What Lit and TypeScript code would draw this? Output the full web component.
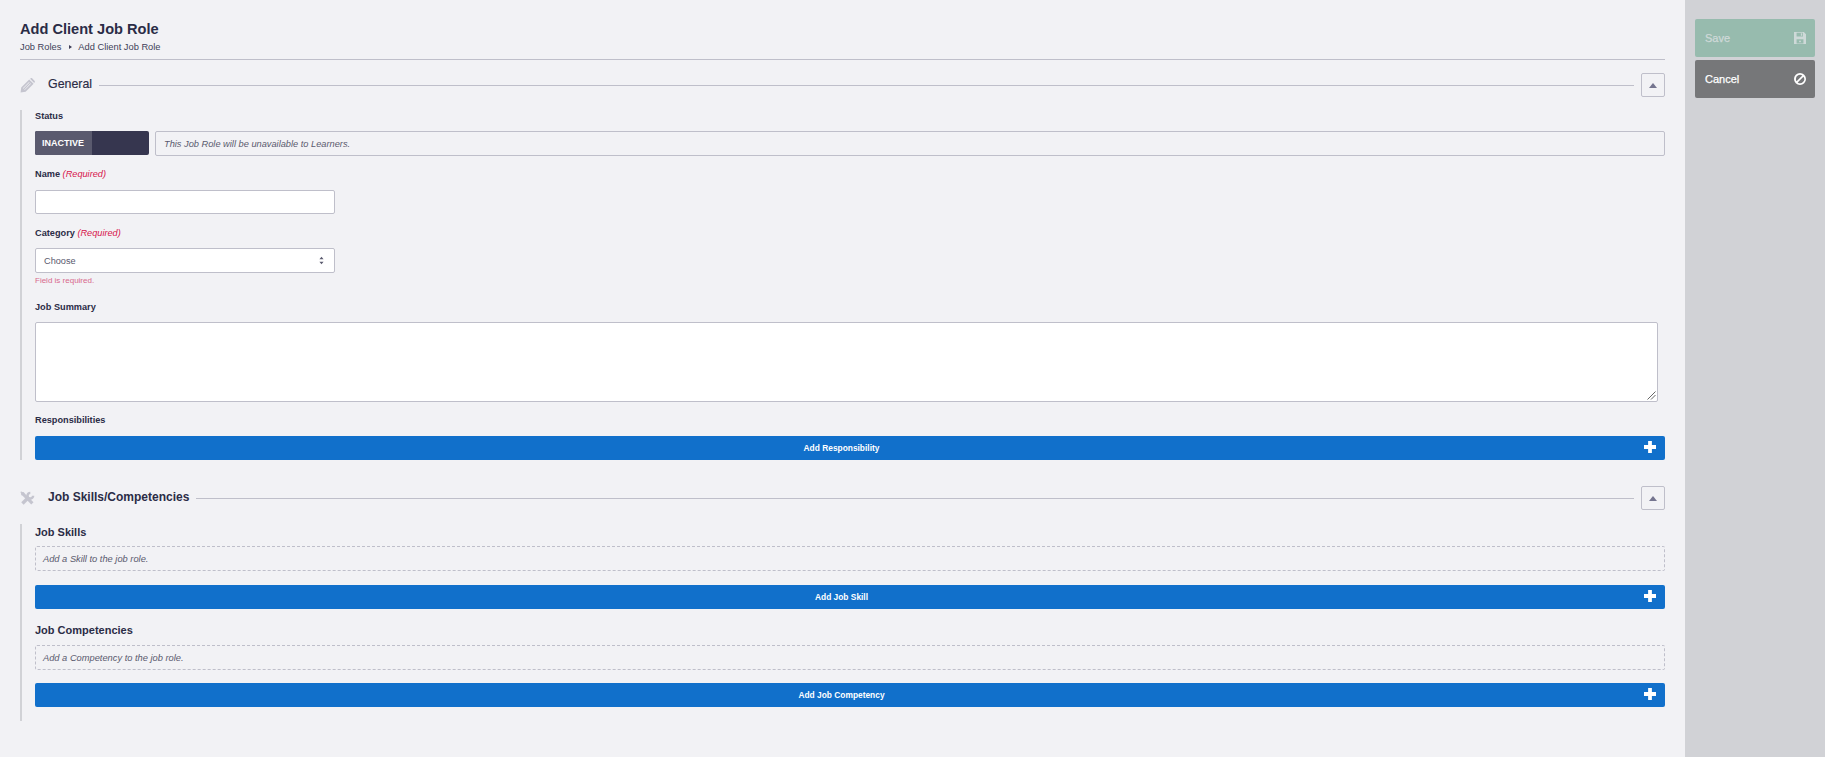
import { LitElement, html, css, svg } from "lit";
import { customElement } from "lit/decorators.js";

const pencil = svg`<path fill-rule="evenodd" d="M.6 15.400 1.300 10 9.800 1.500 14.500 6.200 6 14.700zM3 10.900 9.700 4.200 10.200 4.700 3.500 11.400zM5 12.900 11.700 6.200 11.200 5.700 4.500 12.400zM10.700 .9 11.600.3c.4-.3.9-.3 1.300 0l2.800 2.800c.3.4.3.9 0 1.300l-.6.9z"/>`;
const tools = svg`
  <path d="M2.600 2.600 13.200 13.200" stroke-width="3.300" fill="none"/>
  <path d="M1 1 4.500 2.200 2.200 4.500z" stroke-width="1"/>
  <path d="M2.600 13.400 9.300 6.700" stroke-width="3.600" fill="none"/>
  <path d="M11 2A3 3 0 1 0 14 5" stroke-width="2.600" fill="none"/>`;
const save = svg`<path fill-rule="evenodd" d="M1 1h11.500L15 3.500V15H1zM4 1.800v4.400h7.500V1.800zM4 9.500v5h8v-5zM9 2.600h1.600v2.800H9z"/><circle cx="8" cy="12" r="1.100"/>`;
const ban = svg`<path fill-rule="evenodd" d="M8 1a7 7 0 1 0 0 14A7 7 0 0 0 8 1zM3.200 8a4.800 4.800 0 0 1 7.500-4L4 10.700A4.800 4.800 0 0 1 3.200 8zM5.300 12l6.700-6.700A4.800 4.800 0 0 1 5.300 12z"/>`;
const plus = svg`<path d="M5.800 1h4.400v4.800H15v4.400h-4.800V15H5.800v-4.800H1V5.800h4.800z"/>`;

@customElement("app-root")
export class AppRoot extends LitElement {
  static styles = css`
    :host {
      display: flex;
      width: 1825px;
      height: 757px;
      overflow: hidden;
      background: #f2f2f5;
      color: #2b2c46;
      font-family: "Liberation Sans", Arial, sans-serif;
    }
    * { box-sizing: border-box; }
    .main { width: 1685px; padding: 20px 20px 0; }
    .side {
      width: 140px;
      background: #d1d2d6;
      padding: 19px 10px;
      display: flex;
      flex-direction: column;
      gap: 3px;
    }
    .act {
      height: 38px;
      border-radius: 2px;
      color: #fff;
      font-size: 11px;
      font-weight: 400;
      -webkit-text-stroke: 0.25px currentColor;
      display: flex;
      align-items: center;
      justify-content: space-between;
      padding: 0 9px 0 10px;
    }
    .act svg { width: 12px; height: 12px; fill: currentColor; margin-top: -1px; }
    .save { background: #97bbae; color: #ced9d8; }
    .cancel { background: #767779; }
    h1 { margin: 0; font-size: 14.6px; line-height: 18px; font-weight: 700; }
    .crumbs {
      display: flex;
      align-items: center;
      font-size: 9.3px;
      line-height: 12px;
      margin-top: 3px;
      color: #3e3f58;
    }
    .crumbs i {
      width: 0; height: 0;
      margin: 0 6px 0 8px;
      border-left: 3px solid #3e3f58;
      border-top: 2.500px solid transparent;
      border-bottom: 2.500px solid transparent;
    }
    .head-rule { height: 1px; background: #bfbfca; margin-top: 6px; }
    .sec-head { display: flex; align-items: center; height: 24px; margin-top: 13px; }
    .sec-head.second { margin-top: 26px; }
    .sec-icon { width: 15px; height: 15px; fill: #c5c5cf; stroke: #c5c5cf; stroke-width: 0; flex: none; margin-right: 13px; }
    .sec-head h2 {
      margin: 0 0 2px;
      font-size: 12.4px;
      font-weight: 400;
      -webkit-text-stroke: 0.15px currentColor;
      line-height: 16px;
      white-space: nowrap;
    }
    .sec-head.second h2 { font-size: 12px; font-weight: 700; -webkit-text-stroke: 0; }
    .rule { flex: 1; height: 1px; background: #bfbfca; margin: 0 7px 0 7px; }
    .toggle {
      width: 24px; height: 24px;
      border: 1px solid #bfbfca;
      border-radius: 2px;
      display: flex;
      align-items: center;
      justify-content: center;
    }
    .toggle i {
      width: 0; height: 0;
      border-left: 4.500px solid transparent;
      border-right: 4.500px solid transparent;
      border-bottom: 5px solid #75758f;
    }
    .body {
      border-left: 2px solid #d1d2d6;
      margin-top: 13px;
      padding-left: 13px;
    }
    .second + .body { margin-top: 14px; }
    label {
      display: block;
      font-size: 9.2px;
      font-weight: 700;
      line-height: 12px;
    }
    label em { color: #d7144b; font-weight: 400; font-size: 9.2px; }
    .status-row { display: flex; gap: 6px; margin-top: 9px; }
    .switch { width: 114px; height: 24px; background: #36364f; border-radius: 2px; overflow: hidden; flex: none; }
    .switch span {
      display: flex;
      align-items: center;
      width: 57px;
      height: 24px;
      padding-left: 7px;
      background: #5a5a6e;
      color: #fff;
      font-size: 9px;
      font-weight: 700;
    }
    .note {
      flex: 1;
      height: 25px;
      border: 1px solid #bfbfca;
      border-radius: 2px;
      display: flex;
      align-items: center;
      padding-left: 8px;
      font-size: 9.25px;
      font-style: italic;
      color: #5a5a6e;
    }
    .field {
      width: 300px;
      background: #fff;
      border: 1px solid #bfbfca;
      border-radius: 2px;
    }
    .input { height: 24px; margin-top: 10px; }
    .select {
      height: 25px;
      margin-top: 9px;
      display: flex;
      align-items: center;
      justify-content: space-between;
      padding: 0 10px 0 8px;
      font-size: 9.2px;
      color: #5a5a6e;
    }
    .select svg { width: 5px; height: 9px; fill: #5a5a6e; }
    .error { font-size: 8px; line-height: 10px; color: #d8688c; margin-top: 3px; }
    .ta {
      display: block;
      width: 1623px;
      height: 80px;
      margin-top: 9px;
      background: #fff;
      border: 1px solid #bfbfca;
      border-radius: 2px;
      position: relative;
    }
    .grip { position: absolute; right: 1px; bottom: 1px; width: 9px; height: 9px; }
    .grip path { stroke: #666; stroke-width: 1; fill: none; }
    .add {
      height: 24px;
      background: #1170cb;
      color: #fff;
      border-radius: 2px;
      font-size: 8.4px;
      font-weight: 700;
      display: flex;
      align-items: center;
      padding: 0 9px 0 4px;
    }
    .add span { flex: 1; text-align: center; }
    .add svg { width: 12px; height: 12px; fill: #fff; margin-top: -2px; }
    .sub { font-size: 11px; font-weight: 700; line-height: 14px; }
    .dash {
      height: 25px;
      border: 1px dashed #bfbfca;
      border-radius: 2px;
      display: flex;
      align-items: center;
      padding-left: 7px;
      font-size: 9.3px;
      font-style: italic;
      color: #5a5a6e;
    }
    .mt-name { margin-top: 12px; }
    .mt-cat { margin-top: 13px; }
    .mt-sum { margin-top: 15px; }
    .mt-resp { margin-top: 12px; }
    .mt-add { margin-top: 10px; }
    .mt-dash { margin-top: 7px; }
    .mt-dash2 { margin-top: 8px; }
    .mt-b { margin-top: 14px; }
    .mt-c { margin-top: 13px; }
    .mt-sub { margin-top: 14px; }
    .s2 { padding-top: 1px; padding-bottom: 14px; }
  `;

  private head(icon: unknown, title: string, second = false) {
    return html`<div class="sec-head ${second ? "second" : ""}">
      <svg class="sec-icon" viewBox="0 0 16 16">${icon}</svg>
      <h2>${title}</h2>
      <div class="rule"></div>
      <div class="toggle"><i></i></div>
    </div>`;
  }

  private add(label: string, cls: string) {
    return html`<div class="add ${cls}"><span>${label}</span><svg viewBox="1 1 14 14">${plus}</svg></div>`;
  }

  render() {
    return html`
      <div class="main">
        <h1>Add Client Job Role</h1>
        <div class="crumbs"><span>Job Roles</span><i></i><span>Add Client Job Role</span></div>
        <div class="head-rule"></div>
        ${this.head(pencil, "General")}
        <div class="body">
          <label>Status</label>
          <div class="status-row">
            <div class="switch"><span>INACTIVE</span></div>
            <div class="note">This Job Role will be unavailable to Learners.</div>
          </div>
          <label class="mt-name">Name <em>(Required)</em></label>
          <div class="field input"></div>
          <label class="mt-cat">Category <em>(Required)</em></label>
          <div class="field select">
            <span>Choose</span>
            <svg viewBox="0 0 6 10"><path d="M3 0.500 5.500 3.500H.5zM3 9.500.5 6.500h5z"/></svg>
          </div>
          <div class="error">Field is required.</div>
          <label class="mt-sum">Job Summary</label>
          <div class="ta">
            <svg class="grip" viewBox="0 0 9 9"><path d="M0.500 8.500 8.500 .5M4 8.500 8.500 4"/></svg>
          </div>
          <label class="mt-resp">Responsibilities</label>
          ${this.add("Add Responsibility", "mt-add")}
        </div>
        ${this.head(tools, "Job Skills/Competencies", true)}
        <div class="body s2">
          <div class="sub">Job Skills</div>
          <div class="dash mt-dash">Add a Skill to the job role.</div>
          ${this.add("Add Job Skill", "mt-b")}
          <div class="sub mt-sub">Job Competencies</div>
          <div class="dash mt-dash2">Add a Competency to the job role.</div>
          ${this.add("Add Job Competency", "mt-c")}
        </div>
      </div>
      <div class="side">
        <div class="act save">Save<svg viewBox="1 1 14 14">${save}</svg></div>
        <div class="act cancel">Cancel<svg viewBox="1 1 14 14">${ban}</svg></div>
      </div>
    `;
  }
}
